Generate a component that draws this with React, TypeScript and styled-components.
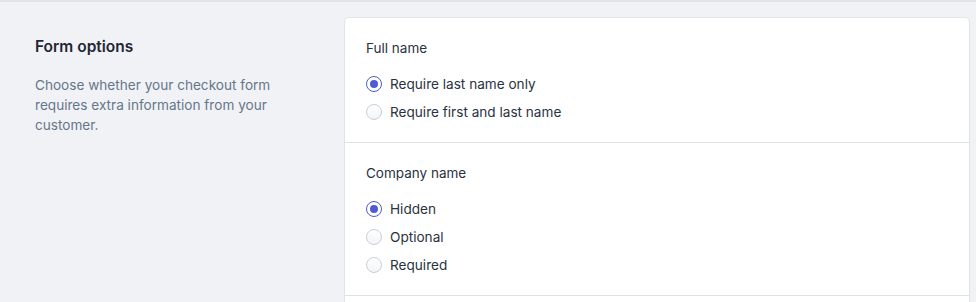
import { useState } from "react";
import styled, { createGlobalStyle } from "styled-components";

const GlobalStyle = createGlobalStyle`
  body {
    margin: 0;
    background: #f1f2f6;
    font-family: Inter, "Noto Sans", sans-serif;
    -webkit-font-smoothing: antialiased;
    overflow: hidden;
  }
`

const Page = styled.div`
  display: grid;
  grid-template-columns: 345px 624px;
  border-top: 2px solid #e2e4ea;
  padding-top: 16px;
  height: 100vh;
  overflow: hidden;
  box-sizing: border-box;
`

const Intro = styled.div`
  padding: 19px 0 0 35px;
`

const IntroTitle = styled.h2`
  margin: 0;
  font-size: 15.5px;
  line-height: 20px;
  font-weight: 600;
  color: #1f2733;
`

const IntroText = styled.p`
  margin: 18px 0 0;
  max-width: 260px;
  font-size: 13.6px;
  line-height: 20px;
  color: #66768a;
`

const Card = styled.div`
  background: #fff;
  border-radius: 4px;
  box-shadow: 0 0 0 1px rgba(40, 50, 70, 0.06), 0 1px 2px rgba(40, 50, 70, 0.08);
  align-self: start;
  padding-bottom: 24px;
`

const Section = styled.div`
  padding: 20px 21px 16px;
  border-bottom: 1px solid #dde1e6;
`

const Label = styled.div`
  font-size: 13.5px;
  line-height: 20px;
  color: #2a3240;
  margin-bottom: 12px;
`

const Option = styled.label`
  display: flex;
  align-items: center;
  gap: 8px;
  height: 28px;
  font-size: 13.6px;
  color: #2a3240;
  cursor: pointer;
`

const Radio = styled.span<{ $checked: boolean }>`
  width: 16px;
  height: 16px;
  box-sizing: border-box;
  border-radius: 50%;
  border: 1px solid ${p => (p.$checked ? "#4f5bd5" : "#c9ced6")};
  background: ${p => (p.$checked ? "#fff" : "linear-gradient(#fff, #f2f4f7)")};
  display: flex;
  align-items: center;
  justify-content: center;
  &::after {
    content: "";
    width: 8px;
    height: 8px;
    border-radius: 50%;
    background: ${p => (p.$checked ? "#4f5bd5" : "transparent")};
  }
`

type GroupProps = {
  label: string
  options: string[]
  initial: number
}

const RadioGroup = ({ label, options, initial }: GroupProps) => {
  const [selected, setSelected] = useState(initial)
  return (
    <Section>
      <Label>{label}</Label>
      {options.map((o, i) => (
        <Option key={o} onClick={() => setSelected(i)}>
          <Radio $checked={selected === i} />
          {o}
        </Option>
      ))}
    </Section>
  )
}

const App = () => {
  return (
    <>
      <GlobalStyle />
      <Page>
        <Intro>
          <IntroTitle>Form options</IntroTitle>
          <IntroText>
            Choose whether your checkout form requires extra information from your customer.
          </IntroText>
        </Intro>
        <Card>
          <RadioGroup
            label="Full name"
            options={["Require last name only", "Require first and last name"]}
            initial={0}
          />
          <RadioGroup label="Company name" options={["Hidden", "Optional", "Required"]} initial={0} />
        </Card>
      </Page>
    </>
  )
}

export default App
